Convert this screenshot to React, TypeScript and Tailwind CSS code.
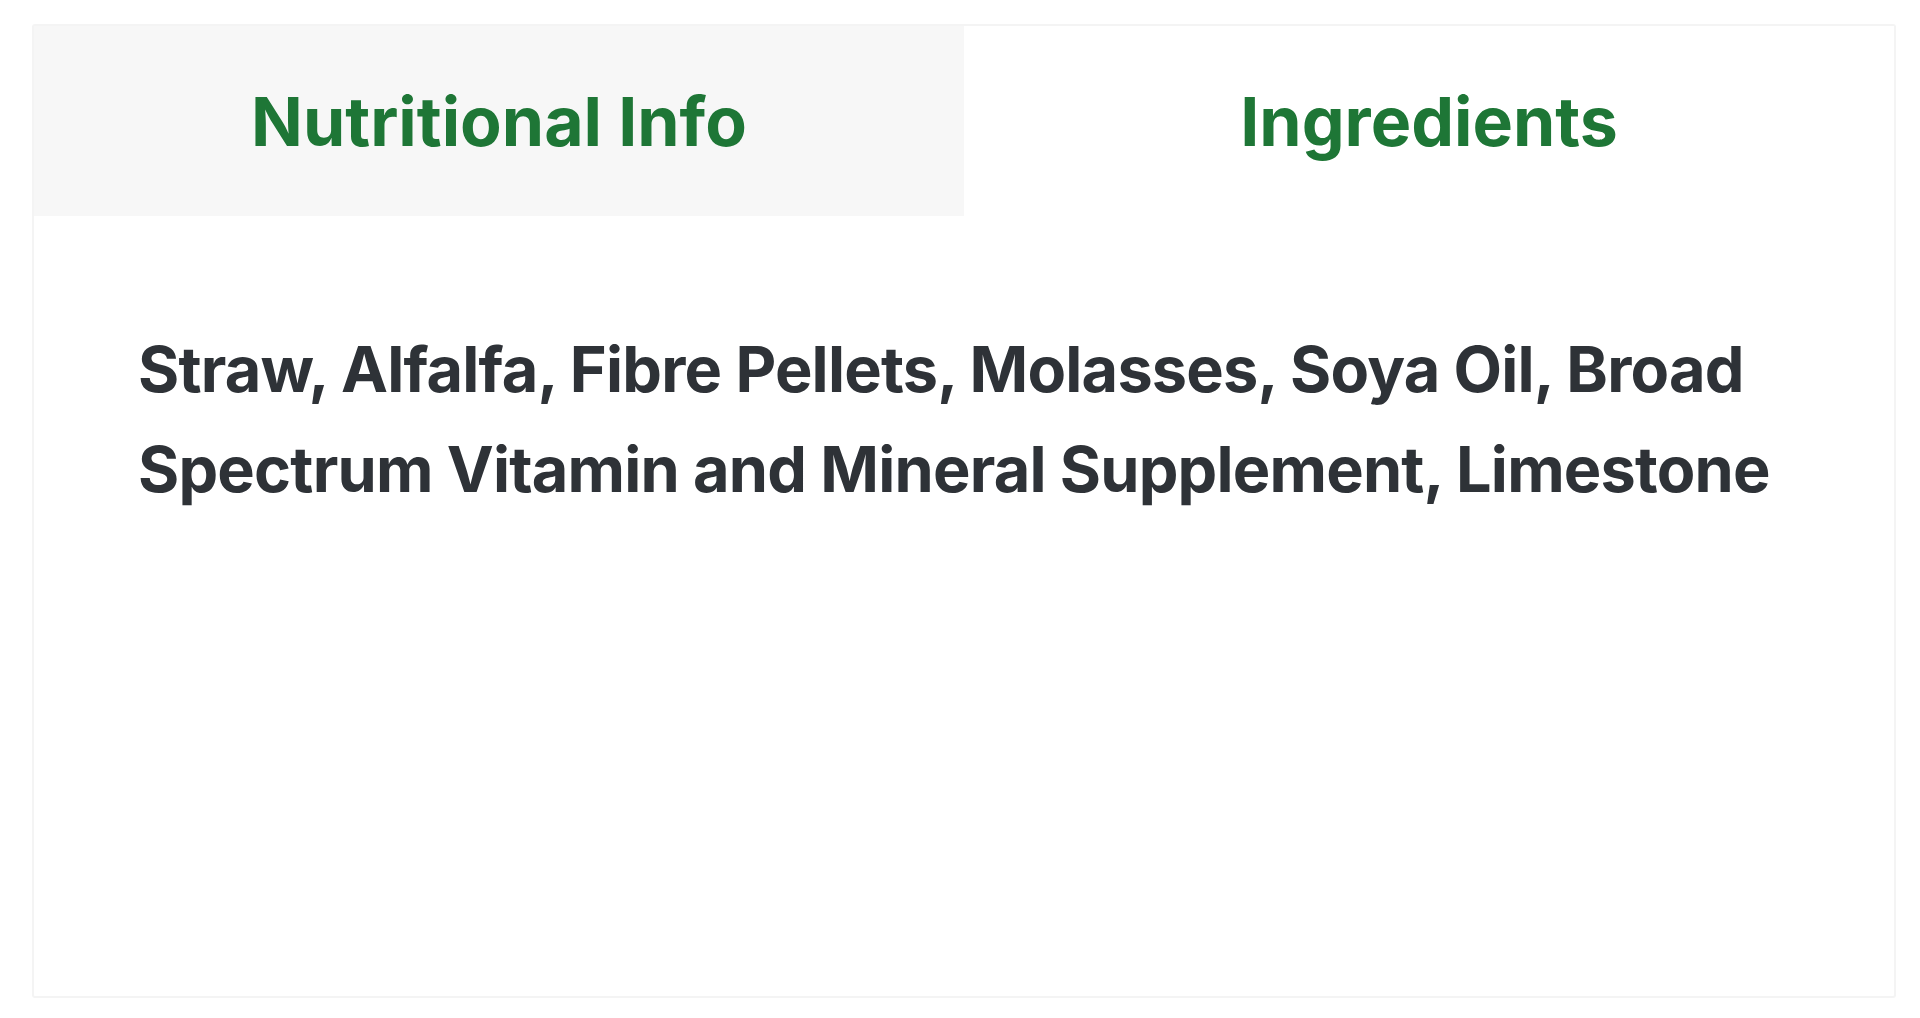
import React from "react";

export default function App() {
  return (
    <div className="w-[1920px] h-[1018px] bg-white pt-[24px] pl-[32px]" style={{ fontFamily: "Inter, 'Noto Sans', sans-serif" }}>
      <div className="w-[1864px] h-[974px] border-2 border-[#f4f4f4] rounded-[3px] bg-white flex flex-col">
        <div className="flex h-[190px]">
          <div className="flex-1 bg-[#f7f7f7] flex items-center justify-center">
            <span className="text-[68px] font-bold text-[#1e7636]">Nutritional Info</span>
          </div>
          <div className="flex-1 bg-white flex items-center justify-center">
            <span className="text-[68px] font-bold text-[#1e7636]">Ingredients</span>
          </div>
        </div>
        <div className="pt-[103px] pl-[104px] pr-[80px]">
          <p className="text-[63px] leading-[100px] font-bold text-[#2e3237] tracking-[-0.8px]">
            Straw, Alfalfa, Fibre Pellets, Molasses, Soya Oil, Broad Spectrum Vitamin and Mineral Supplement, Limestone
          </p>
        </div>
      </div>
    </div>
  );
}
